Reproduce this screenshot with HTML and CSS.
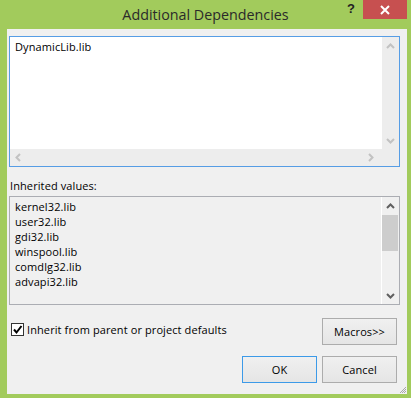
FILE: index.html
```html
<!DOCTYPE html>
<html>
<head>
<meta charset="utf-8">
<link rel="stylesheet" href="styles.css">
</head>
<body>
<div class="window">
  <div class="titlebar">
    <div class="title">Additional Dependencies</div>
    <div class="caption-btns">
      <div class="help">?</div>
      <div class="close">
        <svg width="10" height="10" viewBox="0 0 10 10"><path d="M1 1 L9 9 M9 1 L1 9" stroke="#fff" stroke-width="2" fill="none"/></svg>
      </div>
    </div>
  </div>
  <div class="client">
    <div class="editbox">
      <div class="edit-text">DynamicLib.lib</div>
      <div class="vscroll light">
        <svg class="arrow" width="9" height="6" viewBox="0 0 9 6"><polyline points="1,5 4.5,1.5 8,5" /></svg>
        <svg class="arrow" width="9" height="6" viewBox="0 0 9 6"><polyline points="1,1 4.5,4.5 8,1" /></svg>
      </div>
      <div class="hscroll light">
        <svg class="arrow" width="6" height="9" viewBox="0 0 6 9"><polyline points="5,1 1.5,4.5 5,8" /></svg>
        <svg class="arrow" width="6" height="9" viewBox="0 0 6 9"><polyline points="1,1 4.5,4.5 1,8" /></svg>
      </div>
      <div class="corner"></div>
    </div>
    <div class="label">Inherited values:</div>
    <div class="listbox">
      <div class="list-text">
        <div>kernel32.lib</div>
        <div>user32.lib</div>
        <div>gdi32.lib</div>
        <div>winspool.lib</div>
        <div>comdlg32.lib</div>
        <div>advapi32.lib</div>
      </div>
      <div class="vscroll2">
        <div class="sbtn"><svg class="arrow dark" width="9" height="6" viewBox="0 0 9 6"><polyline points="1,5 4.5,1.5 8,5" /></svg></div>
        <div class="thumb"></div>
        <div class="track"></div>
        <div class="sbtn"><svg class="arrow dark" width="9" height="6" viewBox="0 0 9 6"><polyline points="1,1 4.5,4.5 8,1" /></svg></div>
      </div>
    </div>
    <div class="options">
      <label class="check">
        <span class="box"><svg width="11" height="11" viewBox="0 0 11 11"><polyline points="2,5.5 4.5,8.5 9.5,2" /></svg></span>
        <span>Inherit from parent or project defaults</span>
      </label>
      <div class="btn">Macros&gt;&gt;</div>
    </div>
    <div class="buttons">
      <div class="btn default">OK</div>
      <div class="btn">Cancel</div>
    </div>
    <div class="grip">
      <svg width="8" height="8" viewBox="0 0 8 8"><path d="M7 1 L1 7 M7 3 L3 7 M7 5 L5 7" stroke="#a8a8a8" stroke-width="1" fill="none"/></svg>
    </div>
  </div>
</div>
</body>
</html>
```
FILE: styles.css
```css
html, body {
  margin: 0;
  padding: 0;
}
body {
  background: #a2cb5c;
  font-family: "Open Sans", "Noto Sans", sans-serif;
  font-size: 11px;
  letter-spacing: 0.1px;
  color: #000;
}
.window {
  width: 411px;
  height: 398px;
  display: flex;
  flex-direction: column;
}
.titlebar {
  height: 29px;
  display: grid;
  flex: none;
}
.titlebar > * {
  grid-area: 1 / 1;
}
.title {
  text-align: center;
  font-size: 14.3px;
  letter-spacing: 0;
  line-height: 29px;
  color: #2a2a2a;
}
.caption-btns {
  justify-self: end;
  align-self: start;
  display: flex;
  margin-right: 4px;
}
.help {
  font-family: "Liberation Sans", sans-serif;
  font-weight: bold;
  font-size: 13px;
  line-height: 18px;
  color: #222;
  width: 16px;
  margin-right: 4px;
  text-align: center;
}
.close {
  width: 44px;
  height: 19px;
  background: #c75050;
  display: flex;
  align-items: center;
  justify-content: center;
}
.client {
  flex: 1;
  margin: 0 4px 4px 7px;
  background: #f0f0f0;
  padding: 7px 7px 0 2px;
  position: relative;
}
.editbox {
  height: 131px;
  box-sizing: border-box;
  border: 1px solid #569de5;
  background: #fff;
  display: grid;
  grid-template-columns: 1fr 17px;
  grid-template-rows: 1fr 17px;
}
.edit-text {
  padding: 2px 5px;
  line-height: 15px;
}
.light {
  background: #ededed;
}
.arrow polyline {
  fill: none;
  stroke: #c2c2c2;
  stroke-width: 2;
}
.arrow.dark polyline {
  stroke: #606060;
}
.vscroll {
  display: flex;
  flex-direction: column;
  justify-content: space-between;
  align-items: center;
  padding: 6px 0 5px;
}
.hscroll {
  display: flex;
  justify-content: space-between;
  align-items: center;
  padding: 0 8px 0 5px;
}
.corner {
  background: #ededed;
}
.label {
  margin-top: 11px;
  line-height: 15px;
  padding-left: 1px;
}
.listbox {
  margin-top: 3px;
  height: 109px;
  box-sizing: border-box;
  border: 1px solid #abadb3;
  background: #f0f0f0;
  display: grid;
  grid-template-columns: 1fr 18px;
}
.list-text {
  padding: 2px 5px;
  line-height: 15px;
}
.vscroll2 {
  border-left: 1px solid #fff;
  display: flex;
  flex-direction: column;
}
.sbtn {
  height: 17px;
  display: flex;
  align-items: center;
  justify-content: center;
  flex: none;
}
.thumb {
  height: 36px;
  background: #cdcdcd;
  margin: 1px 1px 0 0;
  flex: none;
}
.track {
  flex: 1;
}
.options {
  display: flex;
  justify-content: space-between;
  align-items: flex-start;
  margin-top: 13px;
  margin-right: 3px;
}
.check {
  display: flex;
  align-items: center;
  gap: 3px;
  margin: 4px 0 0 2px;
}
.box {
  width: 11px;
  height: 11px;
  border: 1px solid #333;
  background: #fff;
  display: flex;
}
.box polyline {
  fill: none;
  stroke: #000;
  stroke-width: 2;
}
.btn {
  width: 75px;
  height: 27px;
  box-sizing: border-box;
  border: 1px solid #acacac;
  background: linear-gradient(#f0f0f0, #e5e5e5);
  display: flex;
  align-items: center;
  justify-content: center;
}
.btn.default {
  border-color: #3c9ae8;
}
.buttons {
  display: flex;
  justify-content: flex-end;
  gap: 5px;
  margin-top: 11px;
  margin-right: 3px;
}
.grip {
  position: absolute;
  right: 0;
  bottom: 0;
  width: 8px;
  height: 8px;
}
.grip svg {
  display: block;
}
```
